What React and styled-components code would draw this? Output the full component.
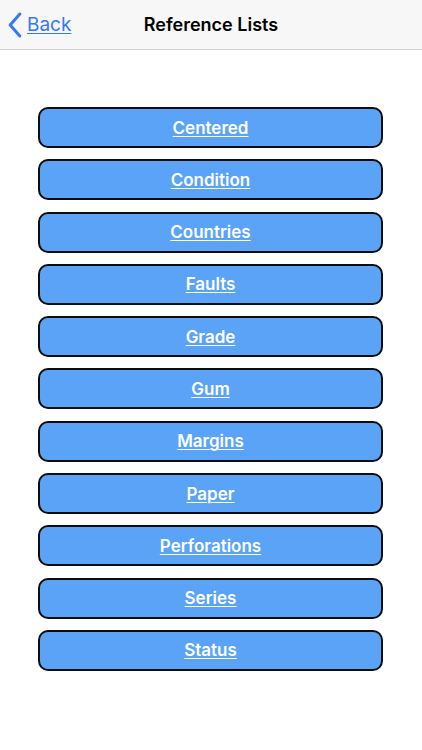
import styled, { createGlobalStyle } from "styled-components";

const GlobalStyle = createGlobalStyle`
  body {
    margin: 0;
    background: #ffffff;
    font-family: Inter, "Liberation Sans", Arial, sans-serif;
  }
`;

const Page = styled.div`
  width: 422px;
  min-height: 750px;
  background: #ffffff;
`;

const NavBar = styled.header`
  height: 49px;
  background: #f7f7f7;
  border-bottom: 1px solid #cfcfcf;
  display: grid;
  grid-template-columns: 1fr auto 1fr;
  align-items: center;
`;

const BackLink = styled.a`
  display: flex;
  align-items: center;
  gap: 5px;
  padding-left: 8px;
  color: #3478f6;
  font-size: 19px;
  text-decoration: underline;
  text-underline-offset: 2px;
  text-decoration-thickness: 1px;
  cursor: pointer;
`;

const Title = styled.h1`
  margin: 0;
  font-size: 18px;
  font-weight: 600;
  color: #000;
`;

const List = styled.ul`
  list-style: none;
  margin: 0;
  padding: 57px 39px 0 38px;
  display: flex;
  flex-direction: column;
  gap: 11.3px;
`;

const ListButton = styled.li`
  height: 37px;
  border: 2px solid #0d0d0d;
  border-radius: 10px;
  background: #5aa3f6;
  display: flex;
  align-items: center;
  justify-content: center;
  color: #ffffff;
  font-size: 17px;
  font-weight: 600;
  text-decoration: underline;
  text-underline-offset: 2px;
  text-decoration-thickness: 1px;
  cursor: pointer;
`;

const lists = [
  "Centered",
  "Condition",
  "Countries",
  "Faults",
  "Grade",
  "Gum",
  "Margins",
  "Paper",
  "Perforations",
  "Series",
  "Status",
];

const App = () => {
  return (
    <Page>
      <GlobalStyle />
      <NavBar>
        <BackLink>
          <svg width="14" height="26" viewBox="0 0 14 26">
            <path
              d="M11.8 2 L2.2 13 L11.8 24"
              fill="none"
              stroke="#3478f6"
              strokeWidth="3"
              strokeLinecap="round"
              strokeLinejoin="round"
            />
          </svg>
          Back
        </BackLink>
        <Title>Reference Lists</Title>
        <div />
      </NavBar>
      <List>
        {lists.map((name) => (
          <ListButton key={name}>{name}</ListButton>
        ))}
      </List>
    </Page>
  );
};

export default App;
